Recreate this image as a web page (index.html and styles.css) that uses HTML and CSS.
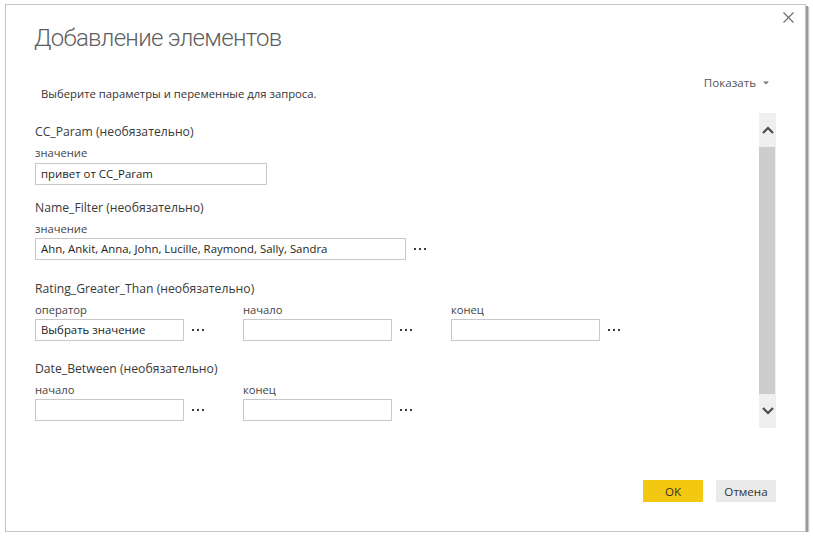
FILE: index.html
```html
<!DOCTYPE html>
<html lang="ru">
<head>
<meta charset="utf-8">
<title>Добавление элементов</title>
<link rel="stylesheet" href="styles.css">
</head>
<body>
<div class="dialog">
  <button class="close" aria-label="Закрыть">
    <svg width="11" height="11" viewBox="0 0 11 11"><path d="M0.5 0.5L10.5 10.5M10.5 0.5L0.5 10.5" stroke="#6a6a6a" stroke-width="1.1" fill="none"/></svg>
  </button>
  <h1 class="title">Добавление элементов</h1>
  <div class="toolbar">
    <p class="hint">Выберите параметры и переменные для запроса.</p>
    <span class="show">Показать <svg class="caret" width="6" height="4" viewBox="0 0 6 4"><path d="M0 0.5H6L3 3.5Z" fill="#777"/></svg></span>
  </div>
  <div class="body">
    <div class="form">
      <section class="param p1">
        <div class="pname">CC_Param (необязательно)</div>
        <div class="fields">
          <div class="field">
            <div class="flabel">значение</div>
            <div class="frow"><div class="input w-231">привет от CC_Param</div></div>
          </div>
        </div>
      </section>
      <section class="param p2">
        <div class="pname">Name_Filter (необязательно)</div>
        <div class="fields">
          <div class="field">
            <div class="flabel">значение</div>
            <div class="frow"><div class="input w-371">Ahn, Ankit, Anna, John, Lucille, Raymond, Sally, Sandra</div><span class="dots"><i></i><i></i><i></i></span></div>
          </div>
        </div>
      </section>
      <section class="param p3">
        <div class="pname">Rating_Greater_Than (необязательно)</div>
        <div class="fields">
          <div class="field col">
            <div class="flabel">оператор</div>
            <div class="frow"><div class="input w-149 select">Выбрать значение</div><span class="dots"><i></i><i></i><i></i></span></div>
          </div>
          <div class="field col">
            <div class="flabel">начало</div>
            <div class="frow"><div class="input w-149"></div><span class="dots"><i></i><i></i><i></i></span></div>
          </div>
          <div class="field col">
            <div class="flabel">конец</div>
            <div class="frow"><div class="input w-149"></div><span class="dots"><i></i><i></i><i></i></span></div>
          </div>
        </div>
      </section>
      <section class="param p4">
        <div class="pname">Date_Between (необязательно)</div>
        <div class="fields">
          <div class="field col">
            <div class="flabel">начало</div>
            <div class="frow"><div class="input w-149"></div><span class="dots"><i></i><i></i><i></i></span></div>
          </div>
          <div class="field col">
            <div class="flabel">конец</div>
            <div class="frow"><div class="input w-149"></div><span class="dots"><i></i><i></i><i></i></span></div>
          </div>
        </div>
      </section>
    </div>
    <div class="scrollbar">
      <div class="sb-btn"><svg width="12" height="8" viewBox="0 0 12 8"><path d="M1 7L6 2L11 7" stroke="#4a4a4a" stroke-width="2.2" fill="none"/></svg></div>
      <div class="sb-thumb"></div>
      <div class="sb-btn"><svg width="12" height="8" viewBox="0 0 12 8"><path d="M1 1L6 6L11 1" stroke="#4a4a4a" stroke-width="2.2" fill="none"/></svg></div>
    </div>
  </div>
  <div class="footer">
    <button class="btn primary">OK</button>
    <button class="btn">Отмена</button>
  </div>
</div>
</body>
</html>
```

FILE: styles.css
```css
* { box-sizing: border-box; }
html, body { background: #fff; }
body {
  margin: 0;
  padding: 4px 0 0 5px;
  font-family: "Open Sans", "Noto Sans", sans-serif;
  color: #333;
}
.dialog {
  position: relative;
  width: 801px;
  height: 528px;
  border: 1px solid #c4c4c4;
  background: #fff;
  box-shadow: 2px 2px 0 #9a9a9a, 3px 3px 1px #c8c8c8;
  padding: 0 29px;
  display: flex;
  flex-direction: column;
}
.close {
  position: absolute;
  top: 7px;
  right: 11px;
  width: 11px;
  height: 11px;
  padding: 0;
  border: 0;
  background: none;
  display: flex;
}
.title {
  margin: 18px 0 0 -1px;
  font-family: Roboto, "Open Sans", sans-serif;
  font-size: 24px;
  letter-spacing: -0.7px;
  line-height: 30px;
  font-weight: 300;
  color: #5e5e5e;
}
.toolbar {
  margin-top: 22px;
  display: flex;
  justify-content: space-between;
  align-items: flex-start;
}
.hint {
  margin: 0;
  padding: 11px 0 0 6px;
  font-size: 11.3px;
  line-height: 16px;
  color: #333;
}
.show {
  font-size: 11.6px;
  line-height: 16px;
  color: #555;
  display: flex;
  align-items: center;
  gap: 7px;
  padding-right: 7px;
}
.body {
  margin-top: 11px;
  height: 315px;
  display: flex;
}
.form {
  flex: 1;
  padding-top: 10px;
}
.p1 .frow { margin-top: 3px; }
.p2 { margin-top: 14px; }
.p3 { margin-top: 20px; }
.p4 { margin-top: 19px; }
.pname {
  font-size: 12.2px;
  line-height: 18px;
  color: #3a3a3a;
}
.fields { display: flex; }
.field.col { width: 208px; }
.flabel {
  margin-top: 4px;
  font-size: 11.2px;
  line-height: 15px;
  color: #444;
}
.frow {
  margin-top: 2px;
  display: flex;
  align-items: center;
}
.input {
  height: 22px;
  border: 1px solid #c8c8c8;
  background: #fff;
  padding: 0 5px;
  font-size: 11.4px;
  line-height: 20px;
  color: #1e1e1e;
  white-space: nowrap;
  overflow: hidden;
}
.w-231 { width: 232px; }
.w-371 { width: 371px; }
.w-149 { width: 149px; }
.dots {
  margin-left: 8px;
  display: flex;
  gap: 3px;
}
.dots i {
  display: block;
  width: 2px;
  height: 2px;
  background: #3c3c3c;
}
.scrollbar {
  width: 17px;
  background: #efefef;
  display: flex;
  flex-direction: column;
}
.sb-btn {
  height: 34px;
  display: flex;
  align-items: center;
  justify-content: center;
}
.sb-thumb {
  flex: 1;
  margin: 0 1px 0 0;
  background: #cdcdcd;
}
.footer {
  margin-top: 52px;
  display: flex;
  justify-content: flex-end;
  gap: 13px;
}
.btn {
  width: 60px;
  height: 22px;
  border: 0;
  padding: 0;
  background: #eaeaea;
  font-family: inherit;
  font-size: 11.6px;
  color: #333;
}
.btn.primary { background: #f2c811; }
```
